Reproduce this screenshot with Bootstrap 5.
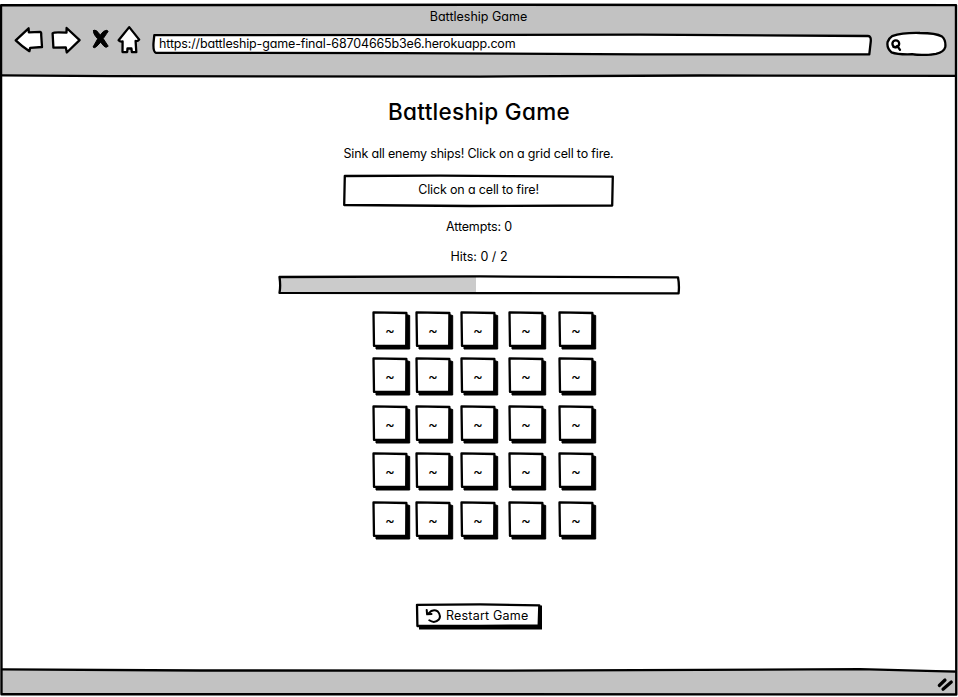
<!DOCTYPE html>
<html lang="en">
<head>
<meta charset="utf-8">
<meta name="viewport" content="width=device-width, initial-scale=1">
<title>Battleship Game</title>
<link href="https://cdn.jsdelivr.net/npm/bootstrap@5.3.0/dist/css/bootstrap.min.css" rel="stylesheet">
<style>
body{font-family:Inter,Lato,sans-serif;font-feature-settings:"cv11","ss03";font-size:12.5px;line-height:16px;color:#000;background:#fff;overflow:hidden}
svg{display:block;fill:none;stroke:#000;stroke-width:2.3;stroke-linejoin:round;stroke-linecap:round}
.browser{width:958px;height:697px;padding-top:4px}
.chrome-top{height:72px;background:#c2c2c2;margin:0 2px 0 1px}
.chrome-bottom{height:25px;background:#c2c2c2;margin:0 2px 2px 1px}
.sketch{position:absolute;inset:0;z-index:0;overflow:visible}
.frame{z-index:2;pointer-events:none}
.label{position:relative;z-index:1;white-space:nowrap}
.win-title{padding-top:5px}
.toolbar{height:32px}
.nav-icons{width:152px;height:32px}
.url{width:720px;height:22px;margin-top:9px;padding:2px 0 0 6px}
.search{width:61px;height:25px;margin:6px 0 0 13px}
.heading{font-size:22.5px;line-height:28px;margin:22px 0 0;letter-spacing:.3px;font-weight:450}
.hint{margin:20px 1px 0 0;letter-spacing:-.17px}
.status{width:271px;height:33px;margin:12px 1px 0 0;padding-top:8px;letter-spacing:-.15px}
.attempts{margin-top:12px;letter-spacing:-.15px}
.hits{margin-top:14px}
.meter{width:403px;height:20px;margin-top:10px}
.board{display:grid;grid-template-columns:43px 45px 48px 50px 38px;grid-template-rows:46px 48px 47px 49px 38px;margin:16px 0 0 10px}
.shot{width:38px;height:38px;border:0;background:none;padding:0;font-size:13px;line-height:36px}
.shot .label{display:block;padding-right:2px;transform:scaleX(1.15)}
.restart{width:128px;height:27px;border:0;background:none;padding:0 0 2px 9px;margin-top:64px;color:#000;letter-spacing:.2px}
.address{letter-spacing:-.15px}
</style>
</head>
<body>
<svg width="0" height="0" class="position-absolute"><defs>
<symbol id="tile" viewBox="0 0 39 39"><path d="M4 34V38H37.7V4.5L34 3.5V34Z" fill="#000" stroke="#000" stroke-width="1"/><path d="M1.5 1.4L34.4 2 34.2 34.6 2 34.9Z" fill="#fff"/></symbol>
</defs></svg>
<div class="browser position-relative d-flex flex-column">
  <header class="chrome-top d-flex flex-column">
    <div class="win-title text-center"><span class="label">Battleship Game</span></div>
    <div class="toolbar d-flex align-items-start">
      <svg class="nav-icons flex-shrink-0" viewBox="1 25 152 32">
        <path fill="#fff" d="M15.7 40.4L28.6 28.3 28.8 32.3 40.2 31.8Q41.5 32 41.2 35L42 47 30.2 47.8 29.4 51.2Q22 46.5 15.7 40.4Z"/>
        <path fill="#fff" d="M52.6 33.2Q54 31.8 66.5 32.7L66.6 28 79.6 40.2 66.8 52.5 65.8 47.4 53.4 47.6Z"/>
        <path fill="#000" stroke-width="1" d="M93.6 30.5Q96 28.6 100.2 35.2Q103.5 30 107 30.2Q109.2 31 106.8 33.3L103.2 38.6 108.2 46.2Q106 48.4 104 46.2L100.6 42.2 96.7 46.4Q94 48.7 93 47L97.7 38.8Q92.6 33.5 93.6 30.5Z"/>
        <path fill="#fff" d="M129.2 27.1L139.2 39.6Q137.5 41.7 135.6 41L136.3 52 131.9 52.1 131.4 48.5 127.5 48.4 127.2 52 122.5 52.1 122.6 41.5Q120 42 118.6 40.3Z"/>
      </svg>
      <div class="url position-relative text-start">
        <svg class="sketch" width="720" height="22" viewBox="153 34 720 22"><path fill="#fff" d="M154.3 35.1L480 34.9 640 34.6 868 36Q871.4 36 870.7 42L869.3 54.3 640 54.3 400 53.2 156 52.8Q153 52 153.5 43Z"/></svg>
        <span class="label address">https://battleship-game-final-68704665b3e6.herokuapp.com</span>
      </div>
      <svg class="search" viewBox="886 31 61 25"><path fill="#fff" d="M892 36.2Q903 32.5 920 33Q936 33 942 36.5Q946 40 945.3 47Q944 52 936 53.8Q922 56 912 54.2Q898 54.7 891.5 52.3Q886.5 48 887.6 42Q889 38 892 36.2Z"/><circle cx="895.8" cy="43.8" r="3.4"/><path d="M893.5 47Q896 48 897.3 46L900 49.8"/></svg>
    </div>
  </header>
  <main class="flex-grow-1 d-flex flex-column align-items-center">
    <h1 class="heading"><span class="label">Battleship Game</span></h1>
    <div class="hint"><span class="label">Sink all enemy ships! Click on a grid cell to fire.</span></div>
    <div class="status position-relative text-center">
      <svg class="sketch" width="271" height="33" viewBox="343 174 271 33"><path fill="#fff" d="M344.8 176L440 175.7 612.8 176.6 612.2 205.5 470 206 344.2 205Z"/></svg>
      <span class="label">Click on a cell to fire!</span>
    </div>
    <div class="attempts"><span class="label">Attempts: 0</span></div>
    <div class="hits"><span class="label">Hits: 0 / 2</span></div>
    <div class="meter position-relative">
      <svg class="sketch" width="403" height="20" viewBox="278 275 403 20"><path fill="#fff" stroke="none" d="M280 276.5H678V293H280Z"/><path fill="#cbcbcb" stroke="none" d="M280 277H476V293H280Z"/><path d="M279.5 277L480 276.4 678 277.3Q679.5 285 678.6 293.3L480 293.2 279.5 292.9Q280.8 286 279.5 277Z"/></svg>
    </div>
    <div class="board" id="board"></div>
    <button class="restart d-flex align-items-center position-relative" type="button">
      <svg class="sketch" width="128" height="27" viewBox="415 603 128 27"><path fill="#000" stroke="none" d="M419 627V629.5H542V605.5H538Z"/><path fill="#fff" d="M417 604.8L480 604.4 539.3 605.3 538.7 625.5 480 625.8 417.4 626Z"/></svg>
      <svg class="label" width="18" height="17" viewBox="424.5 607.5 18 17"><path stroke-width="2" d="M429 613.8Q433.5 608.8 438.2 611.9Q442 616 439.4 620Q435 624.4 429.8 620.8"/><path d="M427.2 610.4L427.6 614.8 432 614.6" stroke-width="2"/></svg>
      <span class="label ms-1">Restart Game</span>
    </button>
  </main>
  <footer class="chrome-bottom"></footer>
  <svg class="sketch frame" width="958" height="697" viewBox="0 0 958 697">
    <path d="M1 5.2L480 4.7 956 5.1 956.3 694.5 480 694.3 1.5 694.2Z" stroke-width="2.4"/>
    <path d="M2 75.4L110 76.2 480 76.6 700 75.5 955 75.8"/>
    <path d="M2 669.4L200 670.5 500 670.6 860 669.2 955 671.6"/>
    <path stroke-width="3.2" d="M939.3 685.5L945 680M943 689.3L951.3 682"/>
  </svg>
</div>
<script src="https://cdn.jsdelivr.net/npm/bootstrap@5.3.0/dist/js/bootstrap.bundle.min.js"></script>
<script>
const board=document.getElementById('board');
for(let i=0;i<25;i++)board.insertAdjacentHTML('beforeend','<button type="button" class="shot position-relative text-center"><svg class="sketch" width="39" height="39"><use href="#tile"/></svg><span class="label">~</span></button>');
</script>
</body>
</html>
